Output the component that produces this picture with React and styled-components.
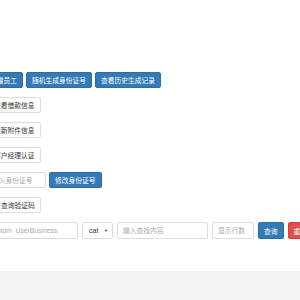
import React from "react";
import styled, { createGlobalStyle } from "styled-components";

const GlobalStyle = createGlobalStyle`
  html, body {
    margin: 0;
    padding: 0;
    background: #ffffff;
    overflow: hidden;
  }
  body {
    font-family: "Liberation Sans", "Noto Sans CJK SC", sans-serif;
  }
`;

export default function App() {
  return (
    <>
      <GlobalStyle />
      <Page>
        <Content>
          <Row $indent={-16}>
            <Button $variant="primary">新增员工</Button>
            <Button $variant="primary">随机生成身份证号</Button>
            <Button $variant="primary">查看历史生成记录</Button>
          </Row>
          <Row $indent={-12}>
            <Button>查看借款信息</Button>
          </Row>
          <Row $indent={-12}>
            <Button>更新附件信息</Button>
          </Row>
          <Row $indent={-12}>
            <Button>客户经理认证</Button>
          </Row>
          <Row $indent={-14}>
            <Input $width={60} placeholder="输入身份证号" />
            <Button $variant="primary">修改身份证号</Button>
          </Row>
          <Row $indent={-5}>
            <Button>查询验证码</Button>
          </Row>
          <Row $indent={-16} $gap={4} $height={17}>
            <Input $width={94} $tall placeholder="custom_UserBusiness" />
            <Select>
              <span>cat</span>
              <Caret>▼</Caret>
            </Select>
            <Input $width={91} $tall placeholder="输入查找内容" />
            <Input $width={42} $tall placeholder="显示行数" />
            <Button $variant="primary" $tall>
              查询
            </Button>
            <Button $variant="danger" $tall>
              重置
            </Button>
          </Row>
        </Content>
        <Footer />
      </Page>
    </>
  );
}

const Page = styled.div`
  width: 300px;
  height: 300px;
  display: flex;
  flex-direction: column;
  overflow: hidden;
`;

const Content = styled.div`
  flex: 1;
  display: flex;
  flex-direction: column;
  gap: 9px;
  padding-top: 72px;
`;

const Row = styled.div`
  display: flex;
  align-items: center;
  gap: ${(p) => (p.$gap ? p.$gap : 3)}px;
  margin-left: ${(p) => p.$indent}px;
  height: ${(p) => p.$height || 16}px;
  flex-shrink: 0;
`;

const colors = {
  default: { bg: "#ffffff", border: "#dddddd", text: "#333333" },
  primary: { bg: "#337ab7", border: "#2e6da4", text: "#ffffff" },
  danger: { bg: "#d9534f", border: "#d43f3a", text: "#ffffff" },
};

const Button = styled.button`
  flex-shrink: 0;
  height: ${(p) => (p.$tall ? 17 : 16)}px;
  padding: 0 5px;
  border: 1px solid ${(p) => colors[p.$variant || "default"].border};
  border-radius: 2px;
  background: ${(p) => colors[p.$variant || "default"].bg};
  color: ${(p) => colors[p.$variant || "default"].text};
  font-family: "Noto Sans CJK SC", sans-serif;
  font-size: 6.75px;
  line-height: 14px;
  white-space: nowrap;
`;

const Input = styled.input`
  flex-shrink: 0;
  box-sizing: border-box;
  width: ${(p) => p.$width}px;
  height: ${(p) => (p.$tall ? 17 : 16)}px;
  padding: 0 5px;
  border: 1px solid #dddddd;
  border-radius: 2px;
  font-family: "Liberation Sans", "Noto Sans CJK SC", sans-serif;
  font-size: 6.75px;
  line-height: 15px;
  outline: none;
  &::placeholder {
    color: #aaaaaa;
  }
`;

const Select = styled.div`
  flex-shrink: 0;
  box-sizing: border-box;
  width: 31px;
  height: 17px;
  padding: 0 4px 0 6px;
  border: 1px solid #dddddd;
  border-radius: 2px;
  display: flex;
  align-items: center;
  justify-content: space-between;
  font-size: 7px;
  color: #333333;
`;

const Caret = styled.span`
  font-size: 4px;
  color: #444444;
`;

const Footer = styled.div`
  height: 29px;
  background: #f3f3f3;
  flex-shrink: 0;
`;
